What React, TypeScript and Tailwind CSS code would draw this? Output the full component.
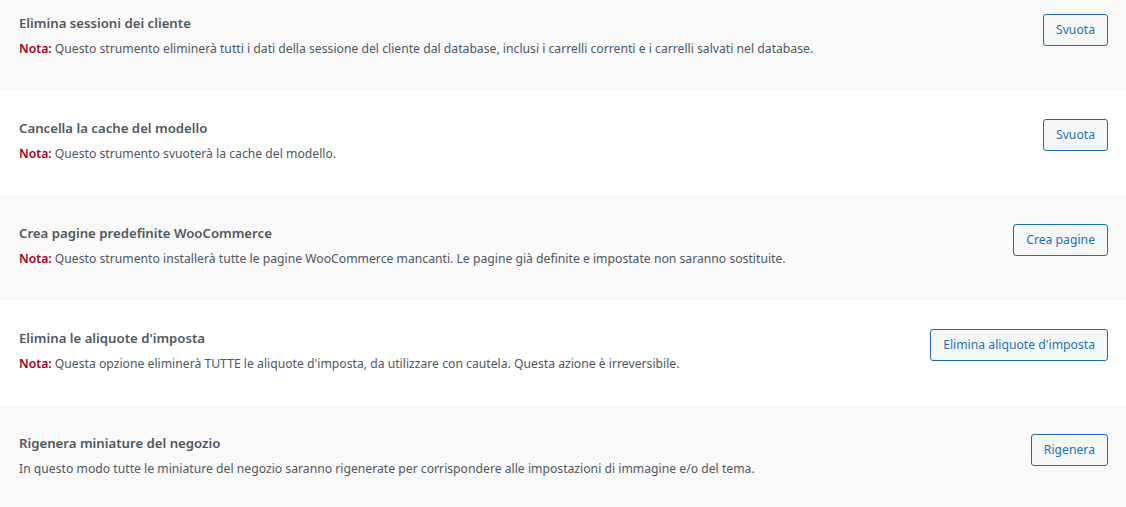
import React from "react";

interface Tool {
  title: string;
  note?: boolean;
  desc: string;
  button: string;
}

const tools: Tool[] = [
  {
    title: "Elimina sessioni dei cliente",
    note: true,
    desc: "Questo strumento eliminerà tutti i dati della sessione del cliente dal database, inclusi i carrelli correnti e i carrelli salvati nel database.",
    button: "Svuota",
  },
  {
    title: "Cancella la cache del modello",
    note: true,
    desc: "Questo strumento svuoterà la cache del modello.",
    button: "Svuota",
  },
  {
    title: "Crea pagine predefinite WooCommerce",
    note: true,
    desc: "Questo strumento installerà tutte le pagine WooCommerce mancanti. Le pagine già definite e impostate non saranno sostituite.",
    button: "Crea pagine",
  },
  {
    title: "Elimina le aliquote d'imposta",
    note: true,
    desc: "Questa opzione eliminerà TUTTE le aliquote d'imposta, da utilizzare con cautela. Questa azione è irreversibile.",
    button: "Elimina aliquote d'imposta",
  },
  {
    title: "Rigenera miniature del negozio",
    desc: "In questo modo tutte le miniature del negozio saranno rigenerate per corrispondere alle impostazioni di immagine e/o del tema.",
    button: "Rigenera",
  },
];

const App = () => {
  return (
    <div className="w-[1126px] h-[507px] overflow-hidden bg-white font-['Noto_Sans',sans-serif]">
      <div className="-mt-[15px]">
        {tools.map((tool, i) => (
          <div
            key={tool.title}
            className={`h-[105px] flex items-start justify-between pl-[19px] pr-[18px] pt-[28px] ${
              i % 2 === 0 ? "bg-[#f9f9f9]" : "bg-white"
            }`}
          >
            <div>
              <div className="text-[13.2px] leading-[20px] font-semibold text-[#50575e]">{tool.title}</div>
              <div className="mt-[6px] text-[12.2px] leading-[20px] text-[#50575e]">
                {tool.note && <span className="font-semibold text-[#a00020]">Nota: </span>}
                {tool.desc}
              </div>
            </div>
            <button className="mt-[1px] h-[32px] px-[12px] rounded-[3px] border border-[#1d6fa8] bg-[#f6f7f7] text-[12.2px] text-[#2271b1] whitespace-nowrap">
              {tool.button}
            </button>
          </div>
        ))}
      </div>
    </div>
  );
};

export default App;
